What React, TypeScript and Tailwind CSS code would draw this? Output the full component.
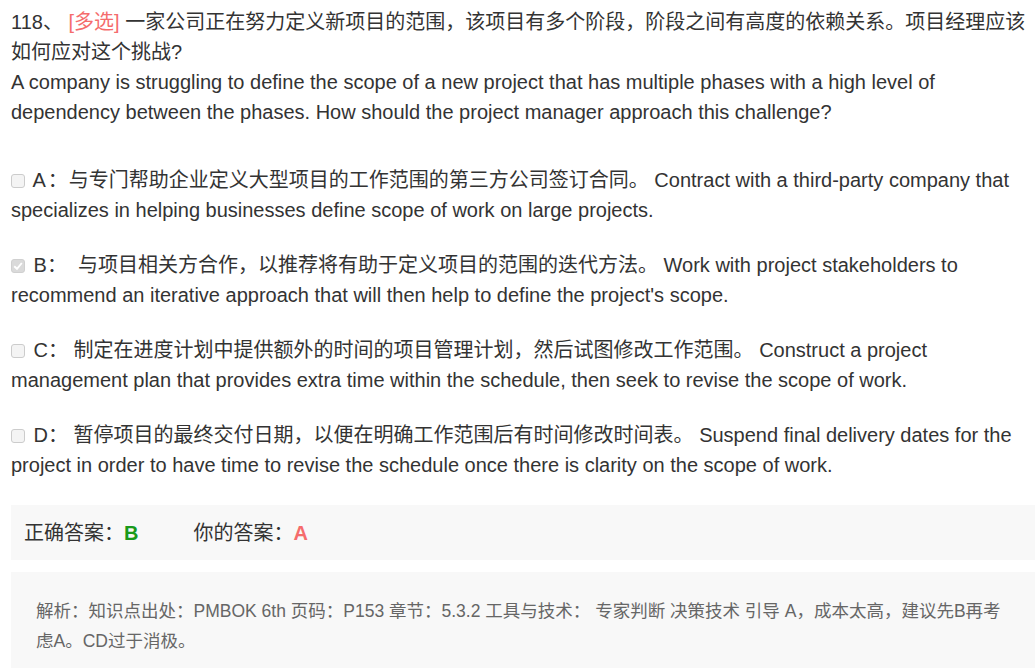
import React from "react";

const font = {
  fontFamily: '"Liberation Sans", Arial, "Noto Sans CJK SC", sans-serif',
};

function Box({ checked }: { checked?: boolean }) {
  if (checked) {
    return (
      <span className="inline-block align-[-1px] w-[14px] h-[14px] rounded-[3px] bg-[#dadada] border border-[#d0d0d0] mr-[3px] relative">
        <svg viewBox="0 0 14 14" className="absolute left-[-1px] top-[-1px] w-[14px] h-[14px]">
          <path d="M3.2 7.2 L6 9.8 L10.8 4" fill="none" stroke="#ffffff" strokeWidth="1.9" />
        </svg>
      </span>
    );
  }
  return (
    <span className="inline-block align-[-1px] w-[14px] h-[14px] rounded-[3px] bg-[#f4f4f4] border border-[#cccccc] mr-[3px]" />
  );
}

const options: { key: string; checked?: boolean; wide?: boolean; text: string }[] = [
  {
    key: "A",
    wide: true,
    text:
      "与专门帮助企业定义大型项目的工作范围的第三方公司签订合同。 Contract with a third-party company that specializes in helping businesses define scope of work on large projects.",
  },
  {
    key: "B",
    checked: true,
    text:
      "\u00a0 与项目相关方合作，以推荐将有助于定义项目的范围的迭代方法。 Work with project stakeholders to recommend an iterative approach that will then help to define the project's scope.",
  },
  {
    key: "C",
    text:
      " 制定在进度计划中提供额外的时间的项目管理计划，然后试图修改工作范围。 Construct a project management plan that provides extra time within the schedule, then seek to revise the scope of work.",
  },
  {
    key: "D",
    text:
      " 暂停项目的最终交付日期，以便在明确工作范围后有时间修改时间表。 Suspend final delivery dates for the project in order to have time to revise the schedule once there is clarity on the scope of work.",
  },
];

export default function App() {
  return (
    <div className="w-[1035px] h-[668px] overflow-hidden bg-white" style={font}>
      <div className="pl-[11px] pt-[7px] text-[20px] leading-[30px] text-[#333333]">
        <div>
          118、 <span className="text-[#f56c6c]">[多选]</span> 一家公司正在努力定义新项目的范围，该项目有多个阶段，阶段之间有高度的依赖关系。项目经理应该如何应对这个挑战?
          <br />
          A company is struggling to define the scope of a new project that has multiple phases with a high level of dependency between the phases. How should the project manager approach this challenge?
        </div>

        <div className="mt-[38px] flex flex-col gap-[25px]">
          {options.map((o) => (
            <div key={o.key}>
              <Box checked={o.checked} /> {o.key}
              {o.wide ? <span className="ml-[2px] mr-[1px]">：</span> : <span>：</span>}
              {o.text}
            </div>
          ))}
        </div>

        <div className="mt-[25px] h-[55px] bg-[#f8f8f8] flex items-center pl-[13px]">
          <span>正确答案：</span>
          <span className="font-bold text-[#1a9a1a]">B</span>
          <span className="ml-[55px]">你的答案：</span>
          <span className="font-bold text-[#f56c6c]">A</span>
        </div>

        <div className="mt-[12px] bg-[#f8f8f8] pt-[24px] pb-[24px] pl-[25px] pr-[25px] text-[17.5px] leading-[30px] text-[#666666]">
          解析：知识点出处：PMBOK 6th 页码：P153 章节：5.3.2 工具与技术： 专家判断 决策技术 引导 A，成本太高，建议先B再考虑A。CD过于消极。
        </div>
      </div>
    </div>
  );
}
